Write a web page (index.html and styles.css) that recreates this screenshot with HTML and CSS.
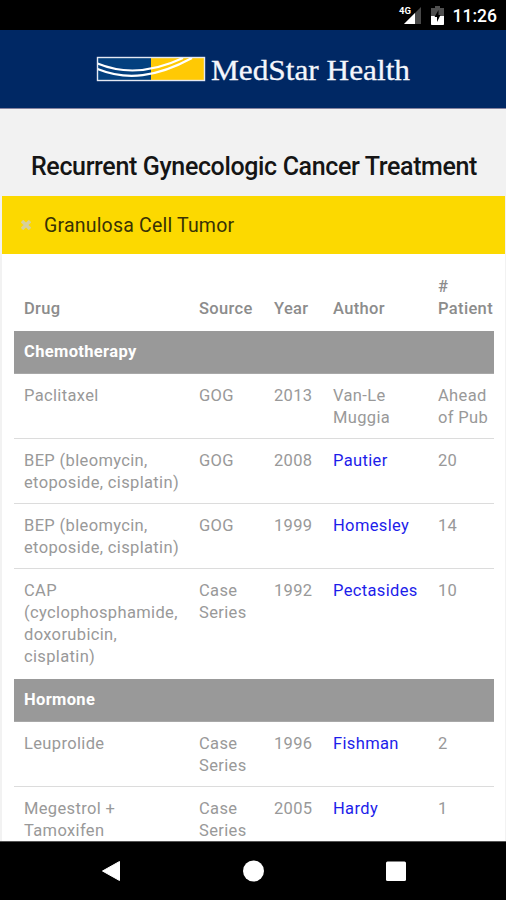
FILE: index.html
```html
<!DOCTYPE html>
<html lang="en">
<head>
<meta charset="utf-8">
<title>Recurrent Gynecologic Cancer Treatment</title>
<link rel="stylesheet" href="styles.css">
</head>
<body>
<div class="status">
  <svg class="signal" width="24" height="20" viewBox="0 0 24 20">
    <path d="M23 2V19H6Z" fill="#484848"/>
    <path d="M17 8V19H6Z" fill="#fff"/>
    <text class="net" x="1" y="9">4G</text>
  </svg>
  <svg class="battery" width="13" height="19" viewBox="0 0 13 19">
    <path d="M4 0H9V2H13V19H0V2H4Z" fill="#505050"/>
    <path d="M0 10H13V18Q13 19 12 19H1Q0 19 0 18Z" fill="#fff"/>
    <path d="M7.5 4L3.5 11H6V16L9.5 9H7.5Z" fill="#000"/>
  </svg>
  <span class="time">11:26</span>
</div>
<header class="brand">
  <svg class="logo" width="320" height="40" viewBox="0 0 320 40">
    <rect x="2.5" y="7.5" width="107" height="23" fill="#03407e"/>
    <rect x="56" y="7.5" width="53.5" height="23" fill="#ffc904"/>
    <g fill="none" stroke="#fff">
      <path d="M2.5 13.5C28 24 56 23 88 8" stroke-width="2"/>
      <path d="M2.5 19C32 31 62 27 97 8" stroke-width="2.2"/>
      <rect x="2.5" y="7.5" width="107" height="23" stroke="#e4e8f2" stroke-width="1.4"/>
    </g>
    <text class="wordmark" x="116" y="29.5" textLength="199" lengthAdjust="spacingAndGlyphs">MedStar Health</text>
  </svg>
</header>
<h1 class="title">Recurrent Gynecologic Cancer Treatment</h1>
<main class="panel">
  <div class="topic">
    <svg class="mark" width="10" height="10" viewBox="0 0 10 10"><path d="M1 1L9 9M9 1L1 9" stroke="#d6cf9c" stroke-width="3.4"/></svg>
    <span>Granulosa Cell Tumor</span>
  </div>
  <table class="drugs">
    <colgroup><col class="c-drug"><col class="c-source"><col class="c-year"><col class="c-author"><col class="c-count"></colgroup>
    <thead><tr><th>Drug</th><th>Source</th><th>Year</th><th>Author</th><th>#<br>Patient</th></tr></thead>
    <tbody>
      <tr class="group"><td colspan="5">Chemotherapy</td></tr>
      <tr><td>Paclitaxel</td><td>GOG</td><td>2013</td><td>Van-Le<br>Muggia</td><td>Ahead<br>of Pub</td></tr>
      <tr><td>BEP (bleomycin,<br>etoposide, cisplatin)</td><td>GOG</td><td>2008</td><td><a>Pautier</a></td><td>20</td></tr>
      <tr><td>BEP (bleomycin,<br>etoposide, cisplatin)</td><td>GOG</td><td>1999</td><td><a>Homesley</a></td><td>14</td></tr>
      <tr class="last"><td>CAP<br>(cyclophosphamide,<br>doxorubicin,<br>cisplatin)</td><td>Case<br>Series</td><td>1992</td><td><a>Pectasides</a></td><td>10</td></tr>
      <tr class="group"><td colspan="5">Hormone</td></tr>
      <tr><td>Leuprolide</td><td>Case<br>Series</td><td>1996</td><td><a>Fishman</a></td><td>2</td></tr>
      <tr><td>Megestrol +<br>Tamoxifen</td><td>Case<br>Series</td><td>2005</td><td><a>Hardy</a></td><td>1</td></tr>
    </tbody>
  </table>
</main>
<nav class="navbar">
  <svg width="20" height="22" viewBox="0 0 20 22"><path d="M18.5 1.5V20.5L1.5 11Z" fill="#fff" stroke="#fff" stroke-linejoin="round"/></svg>
  <svg width="22" height="22" viewBox="0 0 22 22"><circle cx="10.5" cy="11" r="10.5" fill="#fff"/></svg>
  <svg width="20" height="22" viewBox="0 0 20 22"><rect y="1.5" width="20" height="19.5" rx="1.5" fill="#fff"/></svg>
</nav>
</body>
</html>
```
FILE: styles.css
```css
* { box-sizing: border-box; }
body {
  margin: 0;
  width: 506px;
  height: 900px;
  overflow: hidden;
  display: flex;
  flex-direction: column;
  background: #f2f2f2;
  font-family: Roboto, sans-serif;
}
.status {
  flex: none;
  height: 30px;
  padding: 2px 9px 0 0;
  display: flex;
  justify-content: flex-end;
  align-items: center;
  background: #000;
  color: #fff;
}
.signal { margin: 0 9px 3px 0; }
.net { font: 700 9.5px Roboto, sans-serif; fill: #fff; }
.battery { margin: 0 9px 2px 0; }
.time { font-size: 17.5px; font-weight: 500; line-height: 28px; }
.brand {
  flex: none;
  height: 79px;
  padding: 5px 0 0 95px;
  display: flex;
  align-items: flex-start;
  background: #002864;
  border-bottom: 1px solid #85839f;
}
.logo { margin-top: 15px; }
.wordmark { font: 29px "Liberation Serif", serif; fill: #f4f6fc; stroke: #f4f6fc; stroke-width: .3px; }
.title {
  flex: none;
  height: 87px;
  margin: 0;
  padding: 43px 0 0 31px;
  font-size: 25px;
  font-weight: 500;
  line-height: 30px;
  letter-spacing: -0.36px;
  white-space: nowrap;
  color: #151515;
}
.panel {
  flex: 1;
  min-height: 0;
  overflow: hidden;
  margin: 0 1px 0 2px;
  background: #fff;
}
.topic {
  height: 58px;
  padding-left: 20px;
  display: flex;
  align-items: center;
  gap: 13px;
  background: #fcd900;
  font-size: 19.5px;
  letter-spacing: .2px;
  color: #383205;
}
.mark { flex: none; margin-left: -1px; }
.drugs {
  width: 480px;
  margin: 12px 0 0 12px;
  table-layout: fixed;
  border-collapse: separate;
  border-spacing: 0;
  font-size: 16.5px;
  line-height: 22px;
  letter-spacing: .35px;
  color: #999;
}
.c-drug { width: 175px; }
.c-source { width: 75px; }
.c-year { width: 59px; }
.c-author { width: 105px; }
.c-count { width: 66px; }
th, td { padding: 11px 0 9px 10px; text-align: left; vertical-align: top; white-space: nowrap; }
th { padding: 10px 0 11px 10px; vertical-align: bottom; font-weight: 500; color: #8c8c8c; }
td { border-bottom: 1px solid #dcdcdc; }
.group td { padding: 10px 0 10px 10px; background: #999; border-bottom-color: #a8a8a8; color: #fff; font-weight: 700; }
.last td { padding-bottom: 11px; border-bottom: 0; }
a { color: #1d1dea; }
.navbar {
  flex: none;
  height: 59px;
  padding: 0 100px 0 101px;
  display: flex;
  align-items: center;
  justify-content: space-between;
  border-top: 1px solid #555;
  background: #000;
}
```
